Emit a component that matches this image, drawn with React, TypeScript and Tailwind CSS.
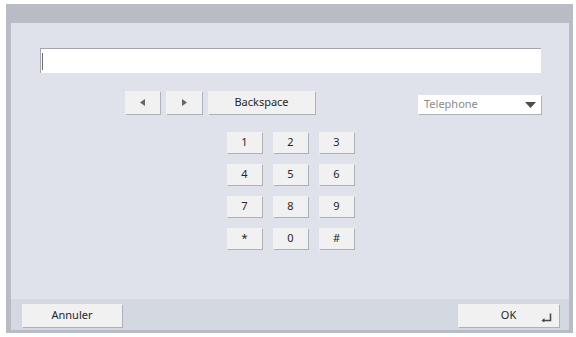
const keys = ["1", "2", "3", "4", "5", "6", "7", "8", "9", "*", "0", "#"];

const btn =
  "flex items-center justify-center bg-[#f1f1f1] text-[#262626] text-[11px] shadow-[1px_1px_0_#aeb1b9]";

function EnterIcon() {
  return (
    <svg width="11" height="9" viewBox="0 0 11 9" className="absolute right-[7px] bottom-[5px]">
      <path d="M9.5 0.5 V7.5 H3" fill="none" stroke="#4a4a4a" strokeWidth="1.6" />
      <path d="M0.5 7.5 L3.5 5 V10 Z" fill="#4a4a4a" />
    </svg>
  );
}

export default function App() {
  return (
    <div
      className="w-[576px] h-[337px] bg-white pt-[4px] pl-[6px] pr-[3px] pb-[4px]"
      style={{ fontFamily: '"Noto Sans", "Open Sans", sans-serif' }}
    >
      <div className="h-full bg-[#b9bcc4] pt-[19px] pl-[5px] pr-[4px] pb-[3px] flex flex-col">
        {/* Main panel */}
        <div className="h-[276px] bg-[#dfe2ea] pt-[25px] pl-[29px] pr-[28px] flex flex-col">
          <div className="h-[25px] bg-white border-t border-l border-[#a3a6ad] flex items-center pl-[1px]">
            <div className="w-px h-[17px] bg-[#6b6b6b]" />
          </div>

          <div className="mt-[18px] flex items-end pl-[85px]">
            <button className={`${btn} w-[35px] h-[23px]`}>
              <svg width="5" height="7" viewBox="0 0 5 7">
                <path d="M0 3.5 L5 0 V7 Z" fill="#666" />
              </svg>
            </button>
            <button className={`${btn} w-[36px] h-[23px] ml-[6px]`}>
              <svg width="5" height="7" viewBox="0 0 5 7">
                <path d="M5 3.5 L0 0 V7 Z" fill="#666" />
              </svg>
            </button>
            <button className={`${btn} w-[107px] h-[23px] ml-[6px]`}>Backspace</button>
            <div className="ml-auto w-[123px] h-[19px] bg-white shadow-[1px_1px_0_#aeb1b9] flex items-center pl-[6px] pr-[5px] text-[11px] text-[#8a8a8a]">
              <span className="flex-1">Telephone</span>
              <svg width="11" height="6" viewBox="0 0 11 6">
                <path d="M0 0 H11 L5.5 6 Z" fill="#4d4d4d" />
              </svg>
            </div>
          </div>

          <div className="mt-[18px] ml-[187px] grid grid-cols-[35px_35px_35px] gap-x-[11px] gap-y-[11px] w-max">
            {keys.map((k) => (
              <button key={k} className={`${btn} h-[21px]`}>
                {k}
              </button>
            ))}
          </div>
        </div>

        {/* Footer */}
        <div className="flex-1 bg-[#d4d8e1] flex items-start justify-between pt-[5px] pl-[11px] pr-[10px]">
          <button className={`${btn} w-[100px] h-[23px]`}>Annuler</button>
          <button className={`${btn} relative w-[101px] h-[23px]`}>
            OK
            <EnterIcon />
          </button>
        </div>
      </div>
    </div>
  );
}
